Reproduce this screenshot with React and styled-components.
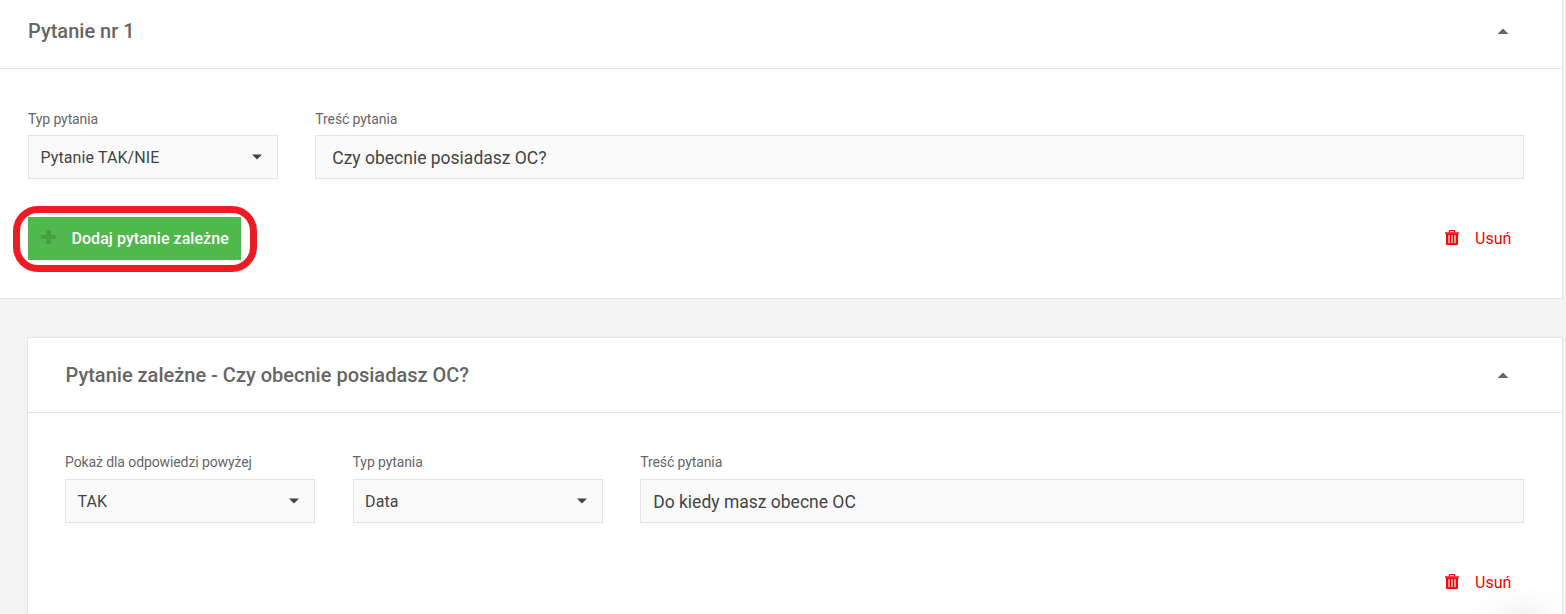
import React from "react";
import styled, { createGlobalStyle } from "styled-components";

const GlobalStyle = createGlobalStyle`
  * { box-sizing: border-box; }
  body {
    margin: 0;
    background: #f3f3f3;
    font-family: Roboto, "Liberation Sans", sans-serif;
    color: #444;
  }
`;

const Page = styled.main`
  position: relative;
  height: 614px;
  overflow: hidden;
  padding-right: 3px;
`;

const Panel = styled.section`
  background: #fff;
  border: 1px solid #e5e5e5;
  border-width: ${(p) => (p.$nested ? "1px 1px 0 1px" : "0 1px 1px 0")};
  margin: ${(p) => (p.$nested ? "38px 0 0 27px" : "0")};
  height: ${(p) => (p.$nested ? "300px" : "299px")};
`;

const PanelHeader = styled.header`
  display: flex;
  align-items: center;
  justify-content: space-between;
  height: ${(p) => (p.$nested ? "75px" : "69px")};
  padding: ${(p) => (p.$nested ? "0 53px 0 37.5px" : "0 53px 6px 28px")};
  border-bottom: 1px solid #e5e5e5;
`;

const Title = styled.h2`
  margin: 0;
  font-size: 20px;
  line-height: 24px;
  font-weight: 500;
  color: #666;
`;

const PanelBody = styled.div`
  padding: ${(p) => (p.$nested ? "40px 38px 0 37px" : "41px 38px 0 28px")};
`;

const FieldRow = styled.div`
  display: flex;
  gap: ${(p) => p.$gap || "37.6px"};
`;

const Field = styled.div`
  display: flex;
  flex-direction: column;
  gap: ${(p) => p.$labelGap || "8px"};
  flex: ${(p) => (p.$grow ? "1" : "0 0 250px")};
`;

const Label = styled.label`
  font-size: 14px;
  line-height: 18px;
  letter-spacing: -0.1px;
  color: #666;
`;

const Control = styled.div`
  display: flex;
  align-items: center;
  justify-content: space-between;
  height: 44px;
  padding: ${(p) => (p.$text ? "2px" : "0")} 15px 0 ${(p) => p.$indent || "11.5px"};
  border: 1px solid #e5e5e5;
  background: #fafafa;
  color: #444;
  font-size: ${(p) => (p.$text ? "17.5px" : "16px")};
  letter-spacing: ${(p) => (p.$text ? "0" : "0.1px")};
`;

const Actions = styled.div`
  display: flex;
  align-items: center;
  justify-content: space-between;
  margin-top: 38px;
  height: 43px;
  padding-right: 12.6px;
`;

const Highlight = styled.span`
  position: absolute;
  inset: -11px -16px -12px -15px;
  border: 7px solid #ed1c24;
  border-radius: 25px;
  pointer-events: none;
`;

const AddButton = styled.button`
  position: relative;
  display: flex;
  align-items: center;
  gap: 15.5px;
  width: 213px;
  height: 43px;
  padding: 0 0 0 13px;
  border: 0;
  background: #50b84c;
  color: #fff;
  font: 500 16px Roboto, sans-serif;
  letter-spacing: 0.05px;
  white-space: nowrap;
`;

const RemoveButton = styled.button`
  display: flex;
  align-items: center;
  gap: 16px;
  margin-left: auto;
  padding: 0;
  border: 0;
  background: none;
  color: #f00;
  font: 400 16px Roboto, sans-serif;
`;

const Icon = styled.svg`
  display: block;
  flex: none;
  margin-bottom: ${(p) => p.$lift || "0"};
`;

const CaretDown = () => (
  <Icon width="10" height="6" viewBox="0 0 10 6"><path d="M0 0.5h10L5 5.5z" fill="#444" /></Icon>
);
const CaretUp = () => (
  <Icon width="12" height="6" viewBox="0 0 12 6"><path d="M0.5 6h11L6 0.5z" fill="#666" /></Icon>
);
const PlusIcon = () => (
  <Icon $lift="3px" width="15" height="14" viewBox="0 0 15 14">
    <path d="M6 0h3q1 0 1 1v4h4q1 0 1 1v2q0 1-1 1h-4v4q0 1-1 1H6q-1 0-1-1V9H1Q0 9 0 8V6q0-1 1-1h4V1q0-1 1-1z" fill="#469f43" />
  </Icon>
);
const TrashIcon = () => (
  <Icon $lift="2px" width="14" height="15" viewBox="0 0 14 15">
    <path fill="none" stroke="#f00" strokeWidth="1.2" d="M4 2.5 4.7 0.7h4.6L10 2.5" />
    <path fill="#f00" d="M0 2.3h14v1.5H0z" />
    <path fill="#f00" fillRule="evenodd" d="M1 3.8h12V14q0 1-1 1H2q-1 0-1-1zM3.4 5v8.3h1.2V5zM6.4 5v8.3h1.2V5zM9.4 5v8.3h1.2V5z" />
  </Icon>
);

const CornerShade = styled.div`
  position: absolute;
  right: 4px;
  bottom: 0;
  width: 96px;
  height: 34px;
  background: radial-gradient(ellipse 56px 30px at 57px 34px, rgba(0, 0, 0, 0.045), rgba(0, 0, 0, 0.015) 50%, transparent);
  pointer-events: none;
`;

const Select = ({ label, value, labelGap }) => (
  <Field $labelGap={labelGap}>
    <Label>{label}</Label>
    <Control>{value}<CaretDown /></Control>
  </Field>
);

const TextField = ({ label, value, indent, labelGap }) => (
  <Field $grow $labelGap={labelGap}>
    <Label>{label}</Label>
    <Control $text $indent={indent}>{value}</Control>
  </Field>
);

const Remove = () => <RemoveButton><TrashIcon />Usuń</RemoveButton>;

export default function App() {
  return (
    <Page>
      <GlobalStyle />
      <Panel>
        <PanelHeader><Title>Pytanie nr 1</Title><CaretUp /></PanelHeader>
        <PanelBody>
          <FieldRow $gap="37.3px">
            <Select label="Typ pytania" value="Pytanie TAK/NIE" labelGap="7px" />
            <TextField label="Treść pytania" value="Czy obecnie posiadasz OC?" indent="16px" labelGap="7px" />
          </FieldRow>
          <Actions>
            <AddButton><PlusIcon />Dodaj pytanie zależne<Highlight /></AddButton>
            <Remove />
          </Actions>
        </PanelBody>
      </Panel>
      <Panel $nested>
        <PanelHeader $nested>
          <Title>Pytanie zależne - Czy obecnie posiadasz OC?</Title><CaretUp />
        </PanelHeader>
        <PanelBody $nested>
          <FieldRow>
            <Select label="Pokaż dla odpowiedzi powyżej" value="TAK" />
            <Select label="Typ pytania" value="Data" />
            <TextField label="Treść pytania" value="Do kiedy masz obecne OC" indent="12px" />
          </FieldRow>
          <Actions><Remove /></Actions>
        </PanelBody>
      </Panel>
      <CornerShade />
    </Page>
  );
}
